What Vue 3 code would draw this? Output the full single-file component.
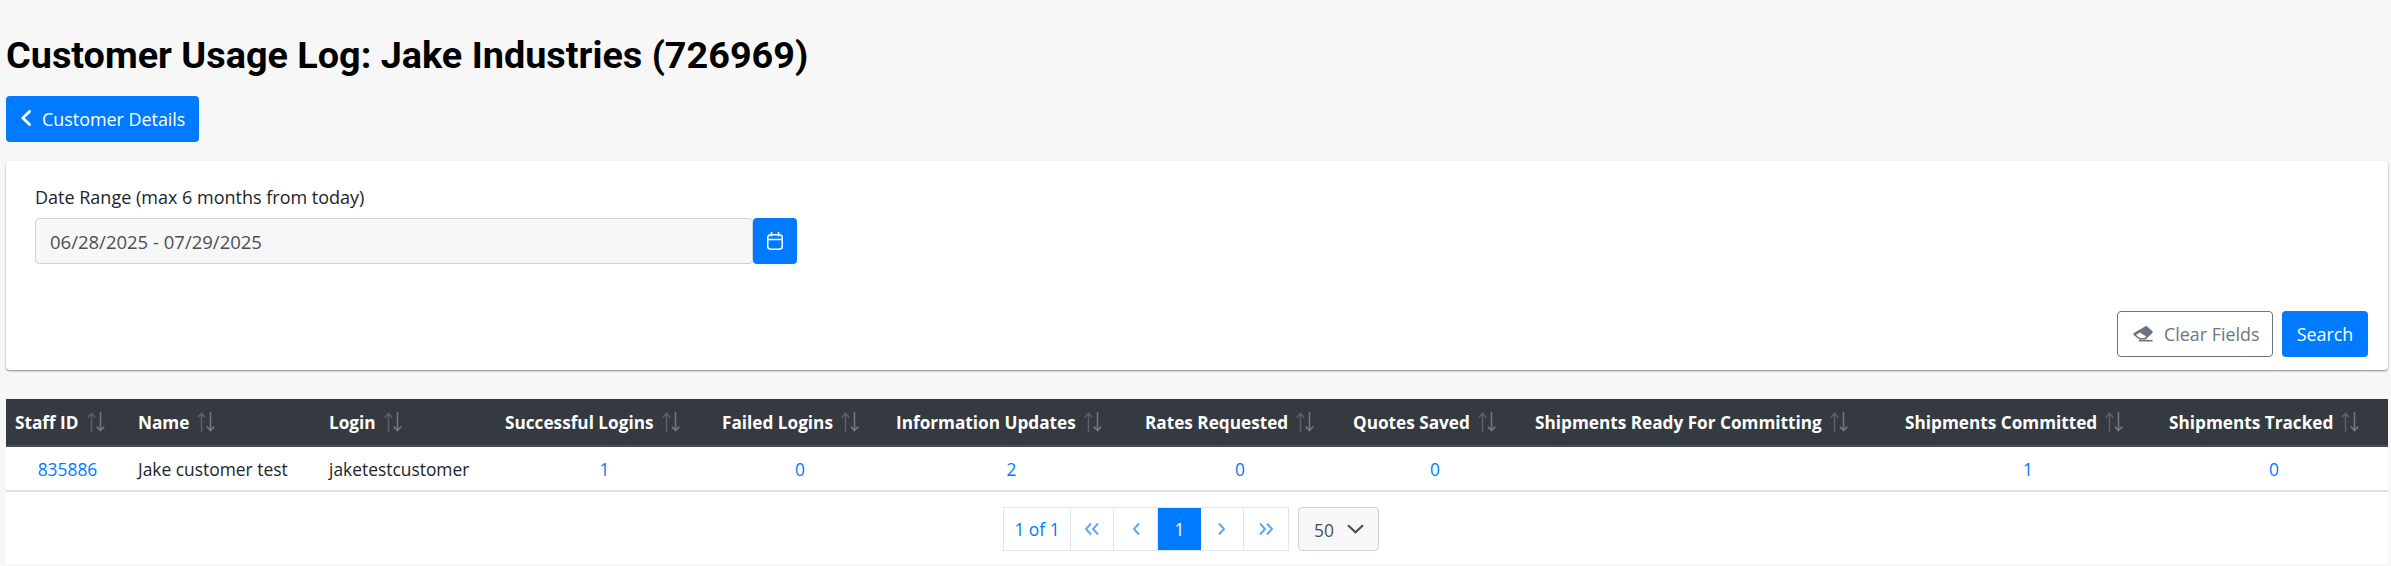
<template>
  <div class="page">
    <h1 class="title">Customer Usage Log: Jake Industries (726969)</h1>

    <button class="btn btn-primary back-btn">
      <svg class="back-icon" viewBox="0 0 10 16" fill="none" stroke="currentColor" stroke-width="2.8" stroke-linecap="round" stroke-linejoin="round">
        <path d="M8.6 1.4 L1.8 8 L8.6 14.6" />
      </svg>
      Customer Details
    </button>

    <section class="card">
      <label class="field-label">Date Range (max 6 months from today)</label>
      <div class="date-group">
        <input class="date-input" type="text" value="06/28/2025 - 07/29/2025" readonly />
        <button class="btn btn-primary cal-btn" aria-label="Open calendar">
          <svg viewBox="0 0 16 18" width="16" height="18" fill="none" stroke="currentColor" stroke-width="1.5">
            <rect x="0.75" y="2.75" width="14.5" height="14.5" rx="3" />
            <path d="M0.75 7.5 H15.25 M4.5 0 V4.5 M11.5 0 V4.5" />
          </svg>
        </button>
      </div>
      <div class="card-actions">
        <button class="btn btn-outline">
          <svg class="eraser" viewBox="0 0 20 16" width="20" height="16">
            <path fill="currentColor" d="M12 0.5 a1.6 1.6 0 0 1 2.2 0 l5 4.4 a1.6 1.6 0 0 1 0.1 2.2 L12.6 13.6 H6.4 L0.9 9.2 a1.6 1.6 0 0 1 -0.1 -2.2 Z M6.8 6.6 L3 9 L6.9 12 H11.6 L13.2 10.6 Z" fill-rule="evenodd" />
            <path fill="currentColor" d="M6 13.9 H19.5 V15.5 H6 Z" />
          </svg>
          Clear Fields
        </button>
        <button class="btn btn-primary search-btn">Search</button>
      </div>
    </section>

    <div class="table-wrap">
      <table class="usage-table">
        <thead>
          <tr>
            <th v-for="col in columns" :key="col.label" :class="col.cls">
              <span class="th-inner">
                {{ col.label }}
                <svg class="sort" viewBox="0 0 18 20" width="18" height="20" fill="none" stroke-width="1.5">
                  <path class="sort-up" d="M4.5 20 V1.5 M0.7 5.5 L4.5 1.4 L8.3 5.5" />
                  <path class="sort-down" d="M13.5 0 V18.5 M9.7 14.5 L13.5 18.6 L17.3 14.5" />
                </svg>
              </span>
            </th>
          </tr>
        </thead>
        <tbody>
          <tr>
            <td class="center"><a class="link">835886</a></td>
            <td>Jake customer test</td>
            <td>jaketestcustomer</td>
            <td class="center"><a class="link">1</a></td>
            <td class="center"><a class="link">0</a></td>
            <td class="center"><a class="link">2</a></td>
            <td class="center"><a class="link">0</a></td>
            <td class="center"><a class="link">0</a></td>
            <td class="center"></td>
            <td class="center"><a class="link">1</a></td>
            <td class="center"><a class="link">0</a></td>
          </tr>
        </tbody>
      </table>

      <div class="pager-row">
        <div class="pager">
          <span class="page-cell count">1 of 1</span>
          <span class="page-cell nav">
            <svg viewBox="0 0 16 14" width="16" height="14" fill="none" stroke="currentColor" stroke-width="1.9"><path d="M7 1.5 L2 7 L7 12.5 M14 1.5 L9 7 L14 12.5" /></svg>
          </span>
          <span class="page-cell nav wide">
            <svg viewBox="0 0 8 14" width="8" height="14" fill="none" stroke="currentColor" stroke-width="1.9"><path d="M7 1.5 L2 7 L7 12.5" /></svg>
          </span>
          <span class="page-cell active">1</span>
          <span class="page-cell nav">
            <svg viewBox="0 0 8 14" width="8" height="14" fill="none" stroke="currentColor" stroke-width="1.9"><path d="M1 1.5 L6 7 L1 12.5" /></svg>
          </span>
          <span class="page-cell nav last">
            <svg viewBox="0 0 16 14" width="16" height="14" fill="none" stroke="currentColor" stroke-width="1.9"><path d="M2 1.5 L7 7 L2 12.5 M9 1.5 L14 7 L9 12.5" /></svg>
          </span>
        </div>
        <div class="per-page">
          <span class="per-page-value">50</span>
          <svg viewBox="0 0 17 10" width="17" height="10" fill="none" stroke="currentColor" stroke-width="2.2"><path d="M1 1.2 L8.5 8.2 L16 1.2" /></svg>
        </div>
      </div>
    </div>
  </div>
</template>

<script setup>
const columns = [
  { label: 'Staff ID', cls: 'c-staff' },
  { label: 'Name', cls: 'c-name' },
  { label: 'Login', cls: 'c-login' },
  { label: 'Successful Logins', cls: 'c-success' },
  { label: 'Failed Logins', cls: 'c-failed' },
  { label: 'Information Updates', cls: 'c-info' },
  { label: 'Rates Requested', cls: 'c-rates' },
  { label: 'Quotes Saved', cls: 'c-quotes' },
  { label: 'Shipments Ready For Committing', cls: 'c-ready' },
  { label: 'Shipments Committed', cls: 'c-committed' },
  { label: 'Shipments Tracked', cls: 'c-tracked' }
]
</script>

<style>
body {
  background: #f7f7f7;
}
</style>

<style scoped>
.page {
  padding: 0 3px 2px 6px;
  font-family: "Open Sans", "Noto Sans", sans-serif;
  font-size: 17.4px;
  color: #212529;
}

.title {
  margin: 0;
  padding-top: 33px;
  height: 96px;
  box-sizing: border-box;
  font-family: Roboto, sans-serif;
  font-size: 37.8px;
  font-weight: 700;
  line-height: 44px;
  color: #000;
}

.btn {
  display: inline-flex;
  align-items: center;
  justify-content: center;
  box-sizing: border-box;
  height: 46px;
  border-radius: 4px;
  border: 1px solid transparent;
  font-family: inherit;
  font-size: 17.9px;
}

.btn-primary {
  background: #007bff;
  color: #fff;
}

.back-btn {
  display: flex;
  justify-content: flex-start;
  width: 193px;
  gap: 11px;
  padding: 0 0 0 14px;
}

.back-icon {
  width: 10px;
  height: 16px;
  margin-top: -2px;
}

.card {
  margin-top: 19px;
  height: 209px;
  box-sizing: border-box;
  padding: 22px 20px 13px 29px;
  display: flex;
  flex-direction: column;
  background: #fff;
  border-radius: 4px;
  box-shadow: 0 1px 2px rgba(0, 0, 0, 0.45);
}

.field-label {
  line-height: 28px;
  font-size: 18px;
  color: #212529;
}

.date-group {
  display: flex;
  margin-top: 7px;
  height: 46px;
}

.date-input {
  width: 718px;
  box-sizing: border-box;
  height: 46px;
  padding: 0 14px;
  background: #f7f7f7;
  border: 1px solid #ced4da;
  border-radius: 4px;
  font-family: inherit;
  font-size: 18.5px;
  color: #495057;
  outline: none;
}

.cal-btn {
  width: 44px;
  padding: 0;
}

.card-actions {
  margin-top: auto;
  display: flex;
  justify-content: flex-end;
  gap: 9px;
}

.btn-outline {
  justify-content: flex-start;
  width: 156px;
  gap: 11px;
  padding: 0 0 0 15px;
  background: #fff;
  border-color: #6c757d;
  color: #6c757d;
}

.search-btn {
  width: 86px;
  padding: 0;
}

.table-wrap {
  margin-top: 29px;
  height: 165px;
  background: #fff;
}

.usage-table {
  width: 100%;
  table-layout: fixed;
  border-collapse: collapse;
}

.usage-table th {
  height: 47px;
  box-sizing: border-box;
  padding: 0 9px;
  background: #343a40;
  border-bottom: 2px solid #454d55;
  color: #fff;
  font-weight: 700;
  font-size: 17.2px;
  text-align: left;
  white-space: nowrap;
}

.th-inner {
  display: inline-flex;
  align-items: center;
  gap: 8px;
}

.sort-up {
  stroke: #5b6168;
}

.sort-down {
  stroke: #747a80;
}

.c-staff { width: 123px; }
.c-name { width: 191px; }
.c-login { width: 176px; }
.c-success { width: 217px; }
.c-failed { width: 174px; }
.c-info { width: 249px; }
.c-rates { width: 208px; }
.c-quotes { width: 182px; }
.c-ready { width: 370px; }
.c-committed { width: 264px; }
.c-tracked { width: 228px; }

.usage-table td {
  height: 45px;
  box-sizing: border-box;
  padding: 0 9px;
  border-bottom: 2px solid #dee2e6;
  white-space: nowrap;
}

.center {
  text-align: center;
}

.link {
  color: #007bff;
}

.pager-row {
  display: flex;
  justify-content: center;
  gap: 9px;
  padding: 15px 12px 0 0;
}

.pager {
  display: flex;
  height: 44px;
  border: 1px solid #e3e6ea;
  box-sizing: border-box;
}

.page-cell {
  display: flex;
  align-items: center;
  justify-content: center;
  width: 43px;
  box-sizing: border-box;
  border-right: 1px solid #e3e6ea;
  color: #5aa5f7;
}

.page-cell.last {
  width: 44px;
  border-right: 0;
}

.page-cell.wide {
  width: 44px;
}

.count {
  width: 67px;
  color: #007bff;
}

.active {
  background: #007bff;
  color: #fff;
  border-right: 0;
}

.per-page {
  display: flex;
  align-items: center;
  gap: 13px;
  width: 81px;
  height: 44px;
  box-sizing: border-box;
  padding-left: 15px;
  background: #f7f7f7;
  border: 1px solid #ced4da;
  border-radius: 4px;
  color: #495057;
}

.per-page-value {
  margin-top: 2px;
}
</style>
